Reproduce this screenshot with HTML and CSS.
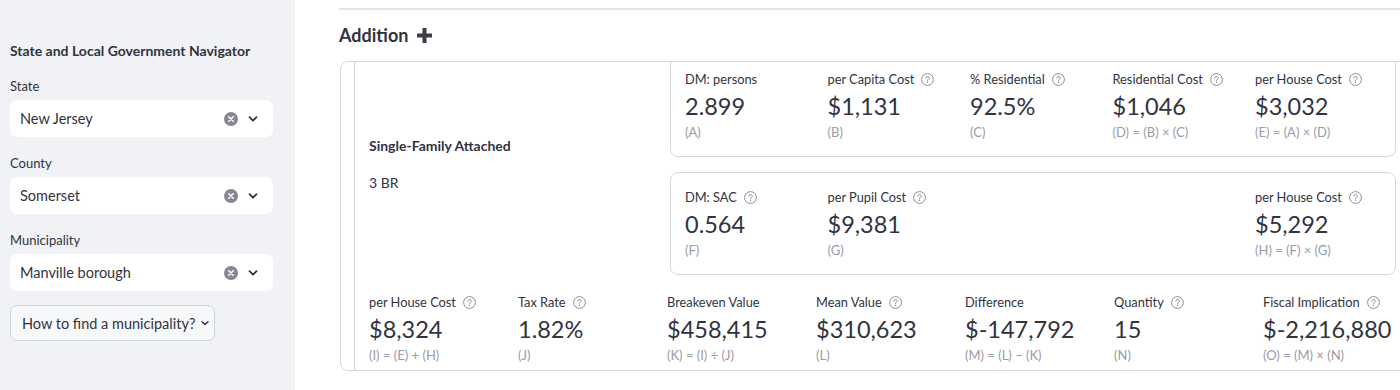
FILE: index.html
```html
<!DOCTYPE html>
<html>
<head>
<meta charset="utf-8">
<link rel="stylesheet" href="styles.css">
</head>
<body>
<div class="app">
  <aside class="sidebar">
    <div class="side-title">State and Local Government Navigator</div>
    <div class="field">
      <div class="field-label">State</div>
      <div class="select"><span class="select-text">New Jersey</span>
        <svg class="clear" width="14" height="14" viewBox="0 0 14 14"><circle cx="7" cy="7" r="7" fill="#858794"/><path d="M4.8 4.8 9.2 9.2M9.2 4.8 4.8 9.2" stroke="#fff" stroke-width="1.6" stroke-linecap="round"/></svg>
        <svg class="chev" width="12" height="12" viewBox="0 0 12 12"><path d="M2.5 4.2 6 7.7 9.5 4.2" fill="none" stroke="#31333f" stroke-width="1.8" stroke-linecap="round" stroke-linejoin="round"/></svg>
      </div>
    </div>
    <div class="field">
      <div class="field-label">County</div>
      <div class="select"><span class="select-text">Somerset</span>
        <svg class="clear" width="14" height="14" viewBox="0 0 14 14"><circle cx="7" cy="7" r="7" fill="#858794"/><path d="M4.8 4.8 9.2 9.2M9.2 4.8 4.8 9.2" stroke="#fff" stroke-width="1.6" stroke-linecap="round"/></svg>
        <svg class="chev" width="12" height="12" viewBox="0 0 12 12"><path d="M2.5 4.2 6 7.7 9.5 4.2" fill="none" stroke="#31333f" stroke-width="1.8" stroke-linecap="round" stroke-linejoin="round"/></svg>
      </div>
    </div>
    <div class="field">
      <div class="field-label">Municipality</div>
      <div class="select"><span class="select-text">Manville borough</span>
        <svg class="clear" width="14" height="14" viewBox="0 0 14 14"><circle cx="7" cy="7" r="7" fill="#858794"/><path d="M4.8 4.8 9.2 9.2M9.2 4.8 4.8 9.2" stroke="#fff" stroke-width="1.6" stroke-linecap="round"/></svg>
        <svg class="chev" width="12" height="12" viewBox="0 0 12 12"><path d="M2.5 4.2 6 7.7 9.5 4.2" fill="none" stroke="#31333f" stroke-width="1.8" stroke-linecap="round" stroke-linejoin="round"/></svg>
      </div>
    </div>
    <div class="howto">How to find a municipality?
      <svg width="10" height="10" viewBox="0 0 10 10"><path d="M2 3.8 5 6.6 8 3.8" fill="none" stroke="#31333f" stroke-width="1.4" stroke-linecap="round" stroke-linejoin="round"/></svg>
    </div>
  </aside>

  <main class="main">
    <div class="rule"></div>
    <h2 class="section-title">Addition
      <svg width="17" height="17" viewBox="0 0 17 17"><path d="M8.5 1v15M1 8.5h15" stroke="#3b3d45" stroke-width="4"/></svg>
    </h2>
    <div class="table">
      <div class="strip"></div>
      <div class="content">
        <div class="row-top">
          <div class="row-label">
            <div class="type-name">Single-Family Attached</div>
            <div class="type-br">3 BR</div>
          </div>
          <div class="cards">
            <div class="card card-first">
              <div class="metric"><div class="m-label">DM: persons</div><div class="m-value">2.899</div><div class="m-sub">(A)</div></div>
              <div class="metric"><div class="m-label">per Capita Cost <svg class="help" width="13" height="13" viewBox="0 0 13 13"><circle cx="6.5" cy="6.5" r="5.9" fill="none" stroke="#8b8d97" stroke-width="1"/><path d="M4.9 5.1a1.65 1.65 0 1 1 2.4 1.45c-.55.3-.8.6-.8 1.2v.3" fill="none" stroke="#8b8d97" stroke-width="1" stroke-linecap="round"/><circle cx="6.5" cy="9.6" r=".65" fill="#8b8d97"/></svg></div><div class="m-value">$1,131</div><div class="m-sub">(B)</div></div>
              <div class="metric"><div class="m-label">% Residential <svg class="help" width="13" height="13" viewBox="0 0 13 13"><circle cx="6.5" cy="6.5" r="5.9" fill="none" stroke="#8b8d97" stroke-width="1"/><path d="M4.9 5.1a1.65 1.65 0 1 1 2.4 1.45c-.55.3-.8.6-.8 1.2v.3" fill="none" stroke="#8b8d97" stroke-width="1" stroke-linecap="round"/><circle cx="6.5" cy="9.6" r=".65" fill="#8b8d97"/></svg></div><div class="m-value">92.5%</div><div class="m-sub">(C)</div></div>
              <div class="metric"><div class="m-label">Residential Cost <svg class="help" width="13" height="13" viewBox="0 0 13 13"><circle cx="6.5" cy="6.5" r="5.9" fill="none" stroke="#8b8d97" stroke-width="1"/><path d="M4.9 5.1a1.65 1.65 0 1 1 2.4 1.45c-.55.3-.8.6-.8 1.2v.3" fill="none" stroke="#8b8d97" stroke-width="1" stroke-linecap="round"/><circle cx="6.5" cy="9.6" r=".65" fill="#8b8d97"/></svg></div><div class="m-value">$1,046</div><div class="m-sub">(D) = (B) × (C)</div></div>
              <div class="metric"><div class="m-label">per House Cost <svg class="help" width="13" height="13" viewBox="0 0 13 13"><circle cx="6.5" cy="6.5" r="5.9" fill="none" stroke="#8b8d97" stroke-width="1"/><path d="M4.9 5.1a1.65 1.65 0 1 1 2.4 1.45c-.55.3-.8.6-.8 1.2v.3" fill="none" stroke="#8b8d97" stroke-width="1" stroke-linecap="round"/><circle cx="6.5" cy="9.6" r=".65" fill="#8b8d97"/></svg></div><div class="m-value">$3,032</div><div class="m-sub">(E) = (A) × (D)</div></div>
            </div>
            <div class="card">
              <div class="metric"><div class="m-label">DM: SAC <svg class="help" width="13" height="13" viewBox="0 0 13 13"><circle cx="6.5" cy="6.5" r="5.9" fill="none" stroke="#8b8d97" stroke-width="1"/><path d="M4.9 5.1a1.65 1.65 0 1 1 2.4 1.45c-.55.3-.8.6-.8 1.2v.3" fill="none" stroke="#8b8d97" stroke-width="1" stroke-linecap="round"/><circle cx="6.5" cy="9.6" r=".65" fill="#8b8d97"/></svg></div><div class="m-value">0.564</div><div class="m-sub">(F)</div></div>
              <div class="metric"><div class="m-label">per Pupil Cost <svg class="help" width="13" height="13" viewBox="0 0 13 13"><circle cx="6.5" cy="6.5" r="5.9" fill="none" stroke="#8b8d97" stroke-width="1"/><path d="M4.9 5.1a1.65 1.65 0 1 1 2.4 1.45c-.55.3-.8.6-.8 1.2v.3" fill="none" stroke="#8b8d97" stroke-width="1" stroke-linecap="round"/><circle cx="6.5" cy="9.6" r=".65" fill="#8b8d97"/></svg></div><div class="m-value">$9,381</div><div class="m-sub">(G)</div></div>
              <div class="metric"></div>
              <div class="metric"></div>
              <div class="metric"><div class="m-label">per House Cost <svg class="help" width="13" height="13" viewBox="0 0 13 13"><circle cx="6.5" cy="6.5" r="5.9" fill="none" stroke="#8b8d97" stroke-width="1"/><path d="M4.9 5.1a1.65 1.65 0 1 1 2.4 1.45c-.55.3-.8.6-.8 1.2v.3" fill="none" stroke="#8b8d97" stroke-width="1" stroke-linecap="round"/><circle cx="6.5" cy="9.6" r=".65" fill="#8b8d97"/></svg></div><div class="m-value">$5,292</div><div class="m-sub">(H) = (F) × (G)</div></div>
            </div>
          </div>
        </div>
        <div class="row-bottom">
          <div class="metric"><div class="m-label">per House Cost <svg class="help" width="13" height="13" viewBox="0 0 13 13"><circle cx="6.5" cy="6.5" r="5.9" fill="none" stroke="#8b8d97" stroke-width="1"/><path d="M4.9 5.1a1.65 1.65 0 1 1 2.4 1.45c-.55.3-.8.6-.8 1.2v.3" fill="none" stroke="#8b8d97" stroke-width="1" stroke-linecap="round"/><circle cx="6.5" cy="9.6" r=".65" fill="#8b8d97"/></svg></div><div class="m-value">$8,324</div><div class="m-sub">(I) = (E) + (H)</div></div>
          <div class="metric"><div class="m-label">Tax Rate <svg class="help" width="13" height="13" viewBox="0 0 13 13"><circle cx="6.5" cy="6.5" r="5.9" fill="none" stroke="#8b8d97" stroke-width="1"/><path d="M4.9 5.1a1.65 1.65 0 1 1 2.4 1.45c-.55.3-.8.6-.8 1.2v.3" fill="none" stroke="#8b8d97" stroke-width="1" stroke-linecap="round"/><circle cx="6.5" cy="9.6" r=".65" fill="#8b8d97"/></svg></div><div class="m-value">1.82%</div><div class="m-sub">(J)</div></div>
          <div class="metric"><div class="m-label">Breakeven Value</div><div class="m-value">$458,415</div><div class="m-sub">(K) = (I) ÷ (J)</div></div>
          <div class="metric"><div class="m-label">Mean Value <svg class="help" width="13" height="13" viewBox="0 0 13 13"><circle cx="6.5" cy="6.5" r="5.9" fill="none" stroke="#8b8d97" stroke-width="1"/><path d="M4.9 5.1a1.65 1.65 0 1 1 2.4 1.45c-.55.3-.8.6-.8 1.2v.3" fill="none" stroke="#8b8d97" stroke-width="1" stroke-linecap="round"/><circle cx="6.5" cy="9.6" r=".65" fill="#8b8d97"/></svg></div><div class="m-value">$310,623</div><div class="m-sub">(L)</div></div>
          <div class="metric"><div class="m-label">Difference</div><div class="m-value">$-147,792</div><div class="m-sub">(M) = (L) − (K)</div></div>
          <div class="metric"><div class="m-label">Quantity <svg class="help" width="13" height="13" viewBox="0 0 13 13"><circle cx="6.5" cy="6.5" r="5.9" fill="none" stroke="#8b8d97" stroke-width="1"/><path d="M4.9 5.1a1.65 1.65 0 1 1 2.4 1.45c-.55.3-.8.6-.8 1.2v.3" fill="none" stroke="#8b8d97" stroke-width="1" stroke-linecap="round"/><circle cx="6.5" cy="9.6" r=".65" fill="#8b8d97"/></svg></div><div class="m-value">15</div><div class="m-sub">(N)</div></div>
          <div class="metric"><div class="m-label">Fiscal Implication <svg class="help" width="13" height="13" viewBox="0 0 13 13"><circle cx="6.5" cy="6.5" r="5.9" fill="none" stroke="#8b8d97" stroke-width="1"/><path d="M4.9 5.1a1.65 1.65 0 1 1 2.4 1.45c-.55.3-.8.6-.8 1.2v.3" fill="none" stroke="#8b8d97" stroke-width="1" stroke-linecap="round"/><circle cx="6.5" cy="9.6" r=".65" fill="#8b8d97"/></svg></div><div class="m-value">$-2,216,880</div><div class="m-sub">(O) = (M) × (N)</div></div>
        </div>
      </div>
    </div>
  </main>
</div>
</body>
</html>
```

FILE: styles.css
```css
* { box-sizing: border-box; }
html, body {
  margin: 0;
  height: 100%;
  background: #fff;
  color: #31333f;
  font-family: "Source Sans Pro", Lato, "Noto Sans", sans-serif;
}
.app {
  display: flex;
  height: 390px;
  overflow: hidden;
}
.sidebar {
  width: 295px;
  flex: none;
  background: #f0f2f6;
  padding: 41px 22px 0 10px;
}
.side-title {
  font-size: 14px;
  font-weight: 700;
  line-height: 20px;
}
.field { margin-top: 15px; }
.field + .field { margin-top: 16px; }
.field-label {
  font-size: 13px;
  line-height: 20px;
  margin-bottom: 4px;
}
.select {
  height: 37px;
  background: #fff;
  border-radius: 7px;
  display: flex;
  align-items: center;
  padding: 0 14px 0 10px;
}
.select-text {
  flex: 1;
  font-size: 14.5px;
}
.clear { margin-right: 9px; }
.howto {
  margin-top: 14px;
  width: 205px;
  height: 36px;
  border: 1px solid #d3d5dc;
  border-radius: 7px;
  background: #f7f8fa;
  display: flex;
  align-items: center;
  gap: 5px;
  padding-left: 11px;
  font-size: 14.5px;
}
.main {
  flex: 1;
  min-width: 0;
  padding-left: 44px;
  overflow: hidden;
}
.rule {
  margin-top: 8px;
  border-top: 2px solid #e3e5eb;
}
.section-title {
  margin: 13px 0 14px;
  font-size: 18px;
  line-height: 24px;
  font-weight: 700;
  display: flex;
  align-items: center;
  gap: 8px;
}
.table {
  margin-left: 1px;
  width: 1110px;
  height: 310px;
  border: 1px solid #d6d7db;
  border-radius: 8px;
  display: flex;
  overflow: hidden;
}
.strip {
  width: 14px;
  flex: none;
  border-right: 1px solid #d6d7db;
}
.content {
  flex: 1;
  padding-left: 14px;
  display: flex;
  flex-direction: column;
}
.row-top {
  display: flex;
  margin-top: -8px;
}
.row-label {
  width: 301px;
  flex: none;
  display: flex;
  flex-direction: column;
  justify-content: center;
  gap: 17px;
  font-size: 14px;
  line-height: 20px;
}
.type-name { font-weight: 700; }
.cards {
  width: 726px;
  flex: none;
  display: flex;
  flex-direction: column;
  gap: 15px;
}
.card {
  border: 1px solid #d6d7db;
  border-radius: 8px;
  padding: 15px 0 15px 14px;
  display: grid;
  grid-template-columns: repeat(5, 142.5px);
}
.row-bottom {
  margin-top: 18px;
  display: grid;
  grid-template-columns: repeat(7, 149px);
}
.metric { min-width: 0; white-space: nowrap; }
.m-label {
  font-size: 12.8px;
  line-height: 18px;
  display: flex;
  align-items: center;
  gap: 7px;
}
.help { flex: none; }
.m-value {
  margin-top: 2px;
  font-size: 23.5px;
  line-height: 32px;
}
.m-sub {
  margin-top: 1px;
  font-size: 13px;
  line-height: 18px;
  color: #9a9ca6;
}
```
